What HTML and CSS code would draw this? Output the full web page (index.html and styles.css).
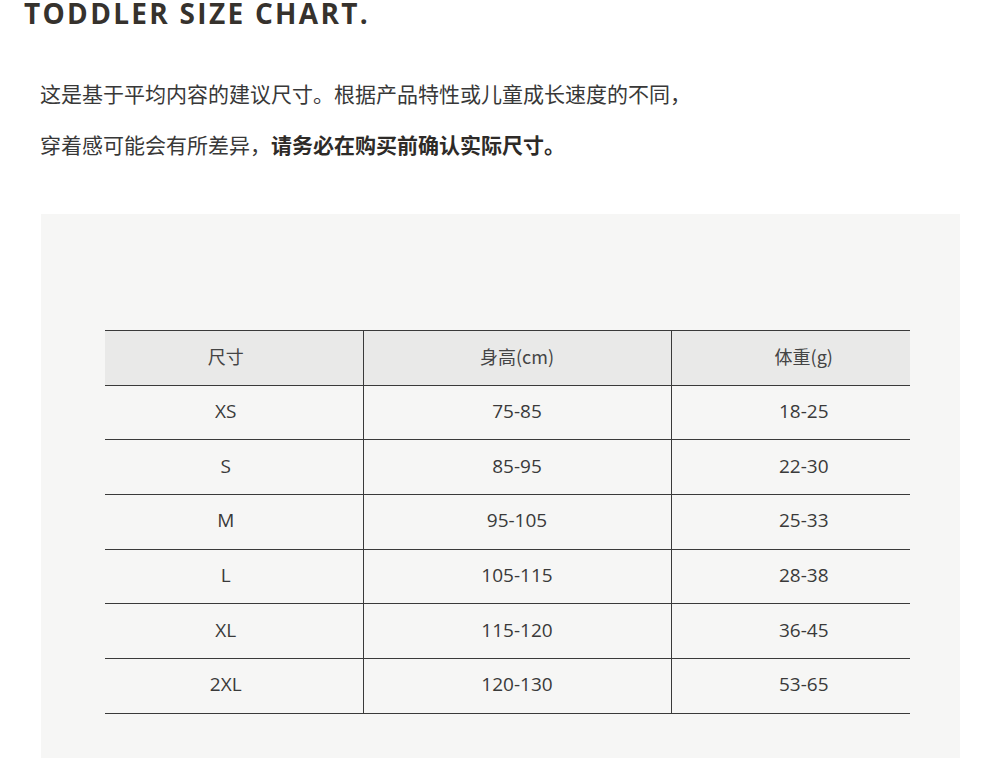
FILE: index.html
```html
<!DOCTYPE html>
<html lang="zh">
<head>
<meta charset="utf-8">
<link rel="stylesheet" href="styles.css">
</head>
<body>
<div class="page">
  <h1 class="title">TODDLER SIZE CHART.</h1>
  <div class="intro">
    <p class="line">这是基于平均内容的建议尺寸。根据产品特性或儿童成长速度的不同，</p>
    <p class="line">穿着感可能会有所差异，<strong>请务必在购买前确认实际尺寸。</strong></p>
  </div>
  <div class="panel">
    <table class="chart">
      <thead>
        <tr><th class="c1">尺寸</th><th class="c2">身高(cm)</th><th class="c3">体重(g)</th></tr>
      </thead>
      <tbody>
        <tr><td>XS</td><td>75-85</td><td>18-25</td></tr>
        <tr><td>S</td><td>85-95</td><td>22-30</td></tr>
        <tr><td>M</td><td>95-105</td><td>25-33</td></tr>
        <tr><td>L</td><td>105-115</td><td>28-38</td></tr>
        <tr><td>XL</td><td>115-120</td><td>36-45</td></tr>
        <tr><td>2XL</td><td>120-130</td><td>53-65</td></tr>
      </tbody>
    </table>
  </div>
</div>
</body>
</html>
```
FILE: styles.css
```css
html, body {
  margin: 0;
  padding: 0;
  background: #ffffff;
}
.page {
  width: 1000px;
  height: 780px;
  overflow: hidden;
  font-family: "Open Sans", "Noto Sans CJK SC", sans-serif;
  color: #333333;
}
.title {
  margin: 0 0 0 24px;
  font-family: "Open Sans", sans-serif;
  font-weight: 700;
  font-size: 28px;
  line-height: 26px;
  letter-spacing: 2.3px;
  color: #36322d;
}
.intro {
  margin: 42px 0 0 40px;
}
.line {
  margin: 0;
  font-family: "Noto Sans CJK SC", sans-serif;
  font-size: 21px;
  line-height: 50px;
  color: #383838;
}
.line + .line {
  margin-top: 1px;
}
.line strong {
  font-weight: 700;
  color: #2e2b28;
}
.panel {
  margin: 45px 0 0 41px;
  width: 919px;
  height: 544px;
  box-sizing: border-box;
  padding: 116px 50px 0 64px;
  background: #f6f6f5;
}
.chart {
  width: 805px;
  border-collapse: collapse;
  table-layout: fixed;
}
.chart th, .chart td {
  box-sizing: border-box;
  height: 54.7px;
  padding: 0 0 3px 0;
  text-align: center;
  border-top: 1px solid #3a3a3a;
  border-bottom: 1px solid #3a3a3a;
  border-left: 1px solid #3a3a3a;
  font-size: 19px;
  color: #3a3a3a;
  font-weight: 400;
}
.chart th:first-child, .chart td:first-child {
  border-left: none;
  padding-right: 16px;
}
.chart th:last-child, .chart td:last-child {
  padding-left: 26px;
}
.chart th {
  background: #e9e9e8;
  font-family: "Noto Sans CJK SC", "Open Sans", sans-serif;
  font-size: 18px;
  color: #444444;
}
.chart td {
  font-family: "Open Sans", sans-serif;
}
.c1 { width: 258px; }
.c2 { width: 308px; }
.c3 { width: 239px; }
```
